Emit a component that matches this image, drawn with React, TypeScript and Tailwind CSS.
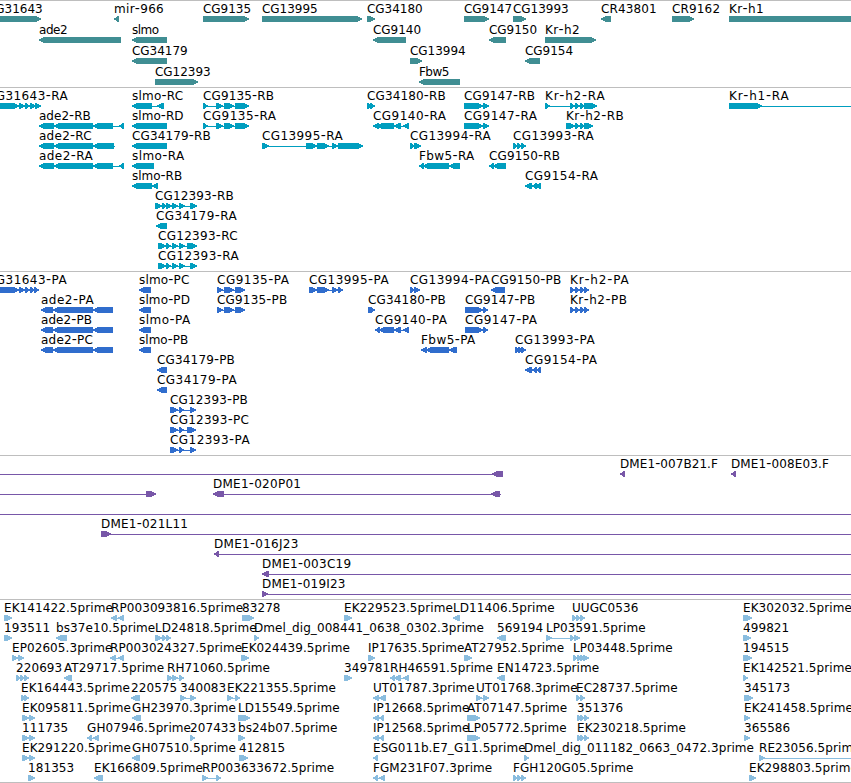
import React from 'react';

type Strand = '>' | '<';

interface Feature {
  label?: string;
  strand?: Strand;
  // block boundaries as start/end pairs: [start, end, start, end, ...]
  blocks?: number[];
  // extent of the connecting line when it runs past the blocks
  span?: [number, number];
  labelX?: number;
}

interface Track {
  name: string;
  color: string;
  rowHeight: number;
  rows: Feature[][];
}

const VIEW_WIDTH = 851;
const GLYPH_HEIGHT = 6;

const f = (
  label: string,
  strand: Strand,
  blocks: number[],
  span?: [number, number],
  labelX?: number
): Feature => ({ label, strand, blocks, span, labelX });

const cg9135R = [203, 208, 216, 223, 224, 234, 235, 249];
const cg9135P = [217, 223, 224, 234, 235, 245];
const ade2P = [41, 53, 53, 93, 93, 113];
const krh2P = [570, 575, 575, 580, 580, 584, 584, 589];

const tracks: Track[] = [
  {
    name: 'genes',
    color: '#408e93',
    rowHeight: 21,
    rows: [
      [
        f('CG31643', '>', [-20, 41], undefined, -13),
        f('mir-966', '<', [114, 119]),
        f('CG9135', '>', [203, 249]),
        f('CG13995', '>', [262, 362]),
        f('CG34180', '>', [367, 375]),
        f('CG9147', '>', [464, 489]),
        f('CG13993', '>', [513, 526]),
        f('CR43801', '<', [601, 611]),
        f('CR9162', '>', [672, 694]),
        f('Kr-h1', '>', [729, 880]),
      ],
      [
        f('ade2', '<', [39, 121]),
        f('slmo', '<', [132, 167]),
        f('CG9140', '<', [373, 406]),
        f('CG9150', '<', [489, 506]),
        f('Kr-h2', '>', [545, 596]),
      ],
      [
        f('CG34179', '<', [132, 167]),
        f('CG13994', '>', [410, 422]),
        f('CG9154', '<', [525, 540]),
      ],
      [f('CG12393', '>', [155, 198]), f('Fbw5', '<', [419, 460])],
    ],
  },
  {
    name: 'transcripts',
    color: '#009ebf',
    rowHeight: 20,
    rows: [
      [
        f('CG31643-RA', '>', [-20, 19, 19, 25, 25, 30, 30, 36, 35, 41], undefined, -13),
        f('slmo-RC', '<', [132, 152, 157, 164]),
        f('CG9135-RB', '>', cg9135R),
        f('CG34180-RB', '>', [367, 371, 370, 375]),
        f('CG9147-RB', '>', [464, 483, 483, 489]),
        f('Kr-h2-RA', '>', [545, 550, 570, 575, 575, 580, 580, 584, 584, 597]),
        f('Kr-h1-RA', '>', [729, 762], [729, 851]),
      ],
      [
        f('ade2-RB', '<', [39, 54, 54, 93, 93, 113, 119, 124]),
        f('slmo-RD', '<', [132, 167]),
        f('CG9135-RA', '>', cg9135R),
        f('CG9140-RA', '<', [373, 379, 377, 394, 394, 401, 403, 409]),
        f('CG9147-RA', '>', [464, 483, 483, 489]),
        f('Kr-h2-RB', '>', [566, 575, 575, 580, 580, 584, 584, 593]),
      ],
      [
        f('ade2-RC', '<', [39, 54, 54, 93, 93, 114], [39, 115]),
        f('CG34179-RB', '<', [132, 167]),
        f('CG13995-RA', '>', [262, 269, 306, 317, 317, 329, 332, 338, 338, 363]),
        f('CG13994-RA', '>', [410, 415, 414, 421]),
        f('CG13993-RA', '>', [513, 518, 517, 522, 521, 526]),
      ],
      [
        f('ade2-RA', '<', [39, 54, 54, 93, 93, 113, 119, 124]),
        f('slmo-RA', '<', [132, 154]),
        f('Fbw5-RA', '<', [419, 424, 423, 449, 449, 460]),
        f('CG9150-RB', '<', [489, 494, 493, 506]),
      ],
      [
        f('slmo-RB', '<', [132, 152, 152, 158]),
        f('CG9154-RA', '<', [525, 532, 532, 537, 535, 541]),
      ],
      [f('CG12393-RB', '>', [155, 162, 162, 167, 166, 172, 172, 178, 179, 185, 190, 197])],
      [f('CG34179-RA', '<', [156, 167])],
      [f('CG12393-RC', '>', [158, 166, 166, 171, 172, 178, 179, 185, 187, 197])],
      [f('CG12393-RA', '>', [158, 166, 166, 171, 172, 178, 179, 185, 190, 197])],
    ],
  },
  {
    name: 'proteins',
    color: '#306dcd',
    rowHeight: 20,
    rows: [
      [
        f('CG31643-PA', '>', [-20, 19, 19, 25, 25, 30, 30, 35, 34, 39], undefined, -13),
        f('slmo-PC', '<', [139, 151]),
        f('CG9135-PA', '>', cg9135P),
        f('CG13995-PA', '>', [309, 317, 317, 329, 332, 338, 338, 343]),
        f('CG13994-PA', '>', [410, 415, 414, 420]),
        f('CG9150-PB', '<', [491, 505]),
        f('Kr-h2-PA', '>', krh2P),
      ],
      [
        f('ade2-PA', '<', ade2P),
        f('slmo-PD', '<', [139, 151]),
        f('CG9135-PB', '>', cg9135P),
        f('CG34180-PB', '>', [368, 371, 370, 375]),
        f('CG9147-PB', '>', [465, 483, 483, 488]),
        f('Kr-h2-PB', '>', krh2P),
      ],
      [
        f('ade2-PB', '<', ade2P),
        f('slmo-PA', '<', [139, 151]),
        f('CG9140-PA', '<', [375, 380, 379, 394, 394, 401, 403, 409]),
        f('CG9147-PA', '>', [465, 483, 483, 488]),
      ],
      [
        f('ade2-PC', '<', ade2P),
        f('slmo-PB', '<', [139, 151]),
        f('Fbw5-PA', '<', [421, 427, 426, 449, 449, 457]),
        f('CG13993-PA', '>', [515, 519, 518, 522, 521, 526]),
      ],
      [
        f('CG34179-PB', '<', [157, 167]),
        f('CG9154-PA', '<', [525, 532, 532, 537, 536, 541]),
      ],
      [f('CG34179-PA', '<', [157, 167])],
      [f('CG12393-PB', '>', [170, 178, 179, 184, 190, 196])],
      [f('CG12393-PC', '>', [170, 178, 179, 184, 187, 196])],
      [f('CG12393-PA', '>', [170, 178, 179, 184, 190, 196])],
    ],
  },
  {
    name: 'bacs',
    color: '#7857a8',
    rowHeight: 20,
    rows: [
      [
        { strand: '<', blocks: [492, 503], span: [0, 503] },
        f('DME1-007B21.F', '<', [620, 625]),
        f('DME1-008E03.F', '<', [731, 736]),
      ],
      [
        { strand: '>', blocks: [146, 156], span: [0, 156] },
        f('DME1-020P01', '<', [213, 224, 491, 500], [213, 501]),
      ],
      [{ span: [0, 851] }],
      [f('DME1-021L11', '>', [101, 111], [101, 851])],
      [f('DME1-016J23', '<', [214, 219], [214, 851])],
      [f('DME1-003C19', '<', [262, 269], [262, 851])],
      [f('DME1-019I23', '>', [262, 268], [262, 851])],
    ],
  },
  {
    name: 'ests',
    color: '#8abddf',
    rowHeight: 20,
    rows: [
      [
        f('EK141422.5prime', '>', [4, 12]),
        f('RP003093816.5prime', '<', [111, 117, 118, 124]),
        f('83278', '>', [242, 254]),
        f('EK229523.5prime', '>', [344, 352]),
        f('LD11406.5prime', '<', [453, 460]),
        f('UUGC0536', '>', [572, 577, 576, 581, 580, 585]),
        f('EK302032.5prime', '>', [743, 752]),
      ],
      [
        f('193511', '>', [4, 12]),
        f('bs37e10.5prime', '<', [56, 67]),
        f('LD24818.5prime', '>', [155, 162, 162, 167, 166, 171]),
        f('Dmel_dig_008441_0638_0302.3prime', '>', [254, 259]),
        f('569194', '<', [497, 506]),
        f('LP03591.5prime', '>', [546, 552, 570, 575, 574, 580]),
        f('499821', '>', [743, 751]),
      ],
      [
        f('EP02605.3prime', '>', [12, 18, 18, 24]),
        f('RP003024327.5prime', '<', [110, 116, 118, 124]),
        f('EK024439.5prime', '>', [241, 249]),
        f('IP17635.5prime', '>', [368, 373, 369, 375]),
        f('AT27952.5prime', '>', [464, 469, 466, 472]),
        f('LP03448.5prime', '>', [573, 578, 577, 581, 580, 584, 583, 589]),
        f('194515', '>', [743, 752]),
      ],
      [
        f('220693', '>', [16, 20, 20, 24, 24, 29]),
        f('AT29717.5prime', '<', [64, 72]),
        f('RH71060.5prime', '>', [167, 173, 172, 178, 179, 184]),
        f('349781', '>', [344, 352]),
        f('RH46591.5prime', '<', [390, 395, 394, 401, 403, 409]),
        f('EN14723.5prime', '<', [497, 505]),
        f('EK142521.5prime', '>', [743, 748]),
      ],
      [
        f('EK164443.5prime', '>', [21, 25, 24, 29]),
        f('220575', '<', [131, 140]),
        f('340083', '>', [180, 186, 190, 196]),
        f('EK221355.5prime', '>', [227, 233, 235, 240]),
        f('UT01787.3prime', '<', [373, 379, 379, 386]),
        f('UT01768.3prime', '>', [476, 482, 483, 489]),
        f('EC28737.5prime', '>', [576, 581, 580, 585]),
        f('345173', '>', [744, 753]),
      ],
      [
        f('EK095811.5prime', '>', [22, 29, 29, 35]),
        f('GH23970.3prime', '<', [132, 141]),
        f('LD15549.5prime', '>', [238, 250]),
        f('IP12668.5prime', '<', [373, 379, 379, 384]),
        f('AT07147.5prime', '>', [467, 480]),
        f('351376', '>', [577, 581, 580, 585, 584, 589]),
        f('EK241458.5prime', '>', [744, 750]),
      ],
      [
        f('111735', '>', [22, 29, 29, 35]),
        f('GH07946.5prime', '<', [87, 92, 93, 99]),
        f('207433', '>', [190, 195]),
        f('bs24b07.5prime', '>', [238, 245]),
        f('IP12568.5prime', '<', [373, 379, 379, 384]),
        f('LP05772.5prime', '>', [467, 480]),
        f('EK230218.5prime', '>', [577, 581, 580, 585, 584, 589]),
        f('365586', '>', [744, 750]),
      ],
      [
        f('EK291220.5prime', '>', [22, 29, 29, 35]),
        f('GH07510.5prime', '<', [132, 140]),
        f('412815', '>', [239, 248]),
        f('ESG011b.E7_G11.5prime', '<', [373, 378]),
        f('Dmel_dig_011182_0663_0472.3prime', '>', [524, 529]),
        f('RE23056.5prime', '>', [759, 765], [759, 851]),
      ],
      [
        f('181353', '>', [28, 35]),
        f('EK166809.5prime', '<', [94, 103]),
        f('RP003633672.5prime', '>', [202, 208, 216, 221]),
        f('FGM231F07.3prime', '<', [373, 378, 379, 385]),
        f('FGH120G05.5prime', '>', [513, 518, 517, 522, 521, 526]),
        f('EK298803.5prime', '>', [749, 756]),
      ],
    ],
  },
];

// label widths in px, keyed by gene name and isoform suffix
const nameWidths: Record<string, number> = {
  slmo: 27.2,
  ade2: 28.8,
  'Kr-h1': 34.8,
  'Kr-h2': 34.8,
  Fbw5: 30.4,
  'mir-966': 49.8,
};

const suffixWidths: Record<string, number> = {
  '-RA': 25,
  '-RB': 23,
  '-RC': 24,
  '-RD': 24.5,
  '-PA': 24,
  '-PB': 22.2,
  '-PC': 23.2,
  '-PD': 23.8,
};

const cloneWidths: Record<string, number> = {
  'DME1-020P01': 88,
  'DME1-021L11': 87,
  'DME1-016J23': 84.5,
  'DME1-003C19': 89.2,
  'DME1-019I23': 83.5,
  'DME1-007B21.F': 98,
  'DME1-008E03.F': 98,
};

function labelWidth(label: string): number | undefined {
  if (cloneWidths[label]) return cloneWidths[label];
  const suffix = label.slice(-3);
  const hasSuffix = suffix in suffixWidths;
  const name = hasSuffix ? label.slice(0, -3) : label;
  const width = nameWidths[name] ?? (/^C[GR]\d+$/.test(name) ? name.length * 7.6 + 2.5 : undefined);
  if (width === undefined) return undefined;
  return width + (hasSuffix ? suffixWidths[suffix] : 0);
}

function arrowPoints(start: number, end: number, strand: Strand) {
  const top = 0.5;
  const bottom = GLYPH_HEIGHT - 0.5;
  const mid = GLYPH_HEIGHT / 2;
  const left = start + 0.5;
  const right = end - 0.5;
  // short blocks keep a bit of body behind the head
  const head = Math.min(5, right - left - 1);
  if (strand === '>') {
    return `${left},${top} ${right - head},${top} ${right},${mid} ${right - head},${bottom} ${left},${bottom}`;
  }
  return `${right},${top} ${left + head},${top} ${left},${mid} ${left + head},${bottom} ${right},${bottom}`;
}

function FeatureLabel({ label, x }: { label: string; x: number }) {
  return (
    <text x={x} y={11} fill="#000000" textLength={labelWidth(label)}>
      {label.split(/(-)/).map((part, i) =>
        part === '-' ? (
          <tspan key={i} className="text-[14px]">
            {part}
          </tspan>
        ) : (
          part
        )
      )}
    </text>
  );
}

function FeatureGlyph({ feature, color }: { feature: Feature; color: string }) {
  const blocks = feature.blocks ?? [];
  const [from, to] = feature.span ?? [blocks[0], blocks[blocks.length - 1]];
  const pairs: [number, number][] = [];
  for (let i = 0; i < blocks.length; i += 2) {
    pairs.push([blocks[i], blocks[i + 1]]);
  }

  return (
    <g>
      {feature.label && <FeatureLabel label={feature.label} x={feature.labelX ?? from} />}
      <g transform="translate(0 14)" fill={color} shapeRendering="crispEdges">
        <rect x={from} y={3} width={to - from} height={1} />
        {pairs.map(([start, end]) => (
          <polygon
            key={start}
            points={arrowPoints(start, end, feature.strand ?? '>')}
            stroke={color}
            strokeLinejoin="bevel"
          />
        ))}
      </g>
    </g>
  );
}

function TrackView({ track }: { track: Track }) {
  return (
    <section
      className={`border-t border-[#bebebe] pt-px ${track.name === 'genes' ? 'pb-px' : 'pb-0.5'} last:border-b last:pb-px`}
    >
      {track.rows.map((row, i) => (
        <svg
          key={i}
          width={VIEW_WIDTH}
          height={track.rowHeight}
          className="block overflow-visible font-['DejaVu_Sans',sans-serif] text-[12px] tracking-[0.08px]"
        >
          {row.map((feature, j) => (
            <FeatureGlyph key={j} feature={feature} color={track.color} />
          ))}
        </svg>
      ))}
    </section>
  );
}

export default function App() {
  return (
    <main className="w-[851px] overflow-hidden bg-white">
      {tracks.map(track => (
        <TrackView key={track.name} track={track} />
      ))}
    </main>
  );
}
